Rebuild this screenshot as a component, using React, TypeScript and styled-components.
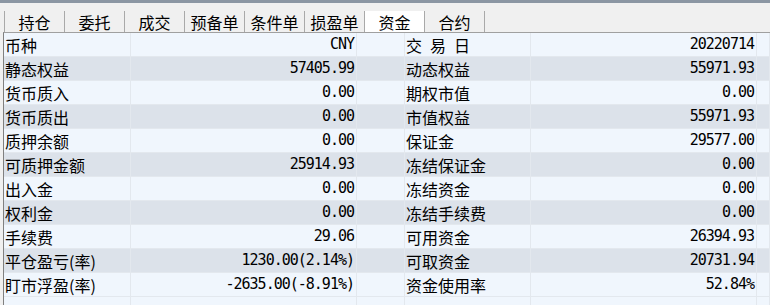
import React from "react";
import styled, { createGlobalStyle } from "styled-components";

const GlobalStyle = createGlobalStyle`
  html, body {
    margin: 0;
    padding: 0;
    background: #f0f0f0;
  }
  body {
    width: 770px;
    height: 305px;
    overflow: hidden;
    font-family: "Noto Sans CJK SC", "Noto Sans", sans-serif;
    color: #000;
  }
`;

const Frame = styled.div`
  display: flex;
  flex-direction: column;
  height: 305px;
`;

const TopBar = styled.div`
  height: 3px;
  background: #8b96a3;
`;

const TabStrip = styled.div`
  display: flex;
  margin-top: 8px;
  padding-left: 4px;
  height: 21px;
`;

const Tab = styled.div<{ $active?: boolean; $first?: boolean }>`
  box-sizing: border-box;
  width: ${(p) => (p.$first ? "61px" : "60px")};
  display: flex;
  align-items: center;
  justify-content: center;
  font-size: 16px;
  line-height: 1;
  padding-top: 1px;
  background: ${(p) => (p.$active ? "#ffffff" : "#f0f0f0")};
  border-right: 1px solid #a9a9a9;
  border-left: ${(p) => (p.$first ? "1px solid #a9a9a9" : "none")};
`;

const Table = styled.div`
  flex: 1;
  display: flex;
  flex-direction: column;
  margin-left: 3px;
  border-left: 1px solid #808080;
  border-top: 1px solid #a0a0a0;
  background: #f0f6fd;
`;

const Row = styled.div<{ $shade?: boolean; $fill?: boolean }>`
  display: grid;
  grid-template-columns: 127px 226px 48px 126px 226px 1fr;
  height: ${(p) => (p.$fill ? "auto" : "24px")};
  flex: ${(p) => (p.$fill ? "1" : "none")};
  background: ${(p) => (p.$shade ? "#dce2ea" : "#f0f6fd")};
`;

const Cell = styled.div<{ $right?: boolean; $spaced?: boolean; $open?: boolean }>`
  box-sizing: border-box;
  display: flex;
  align-items: center;
  justify-content: ${(p) => (p.$right ? "flex-end" : "flex-start")};
  padding: ${(p) => (p.$right ? "0 2px 0 0" : "0 0 0 1px")};
  border-right: 1px solid #e3e8ee;
  border-bottom: ${(p) => (p.$open ? "none" : "1px solid #e3e8ee")};
  white-space: nowrap;
  font-size: 16px;
  line-height: 1;
  letter-spacing: ${(p) => (p.$spaced ? "8px" : "0")};
`;

const Value = styled.span`
  font-family: "DejaVu Sans Mono", "Liberation Mono", monospace;
  font-size: 15px;
  letter-spacing: -1px;
`;

type Item = { label: string; value: string; spaced?: boolean };

const rows: [Item, Item][] = [
  [{ label: "币种", value: "CNY" }, { label: "交易日", value: "20220714", spaced: true }],
  [{ label: "静态权益", value: "57405.99" }, { label: "动态权益", value: "55971.93" }],
  [{ label: "货币质入", value: "0.00" }, { label: "期权市值", value: "0.00" }],
  [{ label: "货币质出", value: "0.00" }, { label: "市值权益", value: "55971.93" }],
  [{ label: "质押余额", value: "0.00" }, { label: "保证金", value: "29577.00" }],
  [{ label: "可质押金额", value: "25914.93" }, { label: "冻结保证金", value: "0.00" }],
  [{ label: "出入金", value: "0.00" }, { label: "冻结资金", value: "0.00" }],
  [{ label: "权利金", value: "0.00" }, { label: "冻结手续费", value: "0.00" }],
  [{ label: "手续费", value: "29.06" }, { label: "可用资金", value: "26394.93" }],
  [{ label: "平仓盈亏(率)", value: "1230.00(2.14%)" }, { label: "可取资金", value: "20731.94" }],
  [{ label: "盯市浮盈(率)", value: "-2635.00(-8.91%)" }, { label: "资金使用率", value: "52.84%" }],
];

const tabs = ["持仓", "委托", "成交", "预备单", "条件单", "损盈单", "资金", "合约"];

export default function App() {
  return (
    <>
      <GlobalStyle />
      <Frame>
        <TopBar />
        <TabStrip>
          {tabs.map((t, i) => (
            <Tab key={t} $first={i === 0} $active={t === "资金"}>
              {t}
            </Tab>
          ))}
        </TabStrip>
        <Table>
          {rows.map(([a, b], i) => (
            <Row key={a.label} $shade={i % 2 === 1}>
              <Cell>{a.label}</Cell>
              <Cell $right>
                <Value>{a.value}</Value>
              </Cell>
              <Cell />
              <Cell $spaced={b.spaced}>{b.label}</Cell>
              <Cell $right>
                <Value>{b.value}</Value>
              </Cell>
              <Cell />
            </Row>
          ))}
          <Row $fill>
            <Cell $open />
            <Cell $open />
            <Cell $open />
            <Cell $open />
            <Cell $open />
            <Cell $open />
          </Row>
        </Table>
      </Frame>
    </>
  );
}
